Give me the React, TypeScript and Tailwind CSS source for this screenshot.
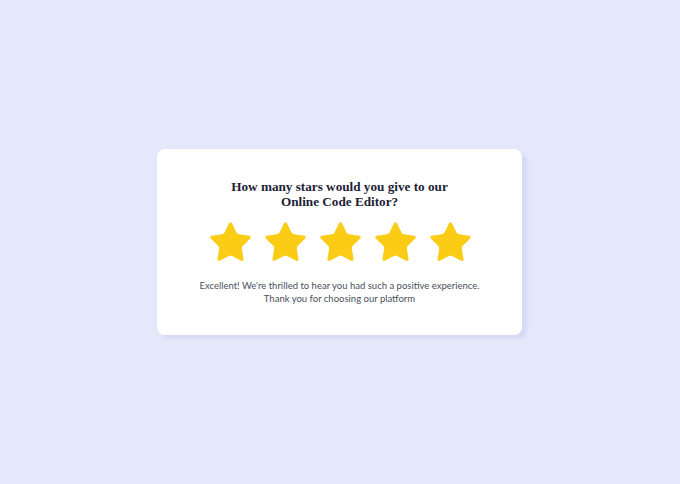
import React from "react";

const Star = () => (
  <svg width="47" height="47" viewBox="0 0 24 24" fill="#facc15" stroke="#facc15" strokeWidth="0.6" strokeLinejoin="round">
    <path d="M11.525 2.295a.53.53 0 0 1 .95 0l2.31 4.679a2.123 2.123 0 0 0 1.595 1.16l5.166.756a.53.53 0 0 1 .294.904l-3.736 3.638a2.123 2.123 0 0 0-.611 1.878l.882 5.14a.53.53 0 0 1-.771.56l-4.618-2.428a2.122 2.122 0 0 0-1.973 0L6.396 21.01a.53.53 0 0 1-.77-.56l.881-5.139a2.122 2.122 0 0 0-.611-1.879L2.16 9.795a.53.53 0 0 1 .294-.906l5.165-.755a2.122 2.122 0 0 0 1.597-1.16z" />
  </svg>
);

export default function App() {
  return (
    <div className="w-[680px] h-[484px] bg-[#e5e7fa] flex items-center justify-center">
      <div className="w-[365px] h-[186px] bg-white rounded-[8px] shadow-[5px_4px_3px_#d7daf5] flex flex-col items-center pt-[30px] ml-[-1px]">
        <h1 className="text-[13.2px] leading-[15px] font-bold text-[#1e2236] text-center" style={{ fontFamily: '"Liberation Serif", serif' }}>
          How many stars would you give to our
          <br />
          Online Code Editor?
        </h1>
        <div className="flex gap-[8px] mt-[10px] ml-[1px]">
          <Star />
          <Star />
          <Star />
          <Star />
          <Star />
        </div>
        <p className="mt-[13px] text-[9.5px] leading-[13px] text-[#4b4f5c] text-center" style={{ fontFamily: 'Lato, sans-serif' }}>
          Excellent! We're thrilled to hear you had such a positive experience.
          <br />
          Thank you for choosing our platform
        </p>
      </div>
    </div>
  );
}
